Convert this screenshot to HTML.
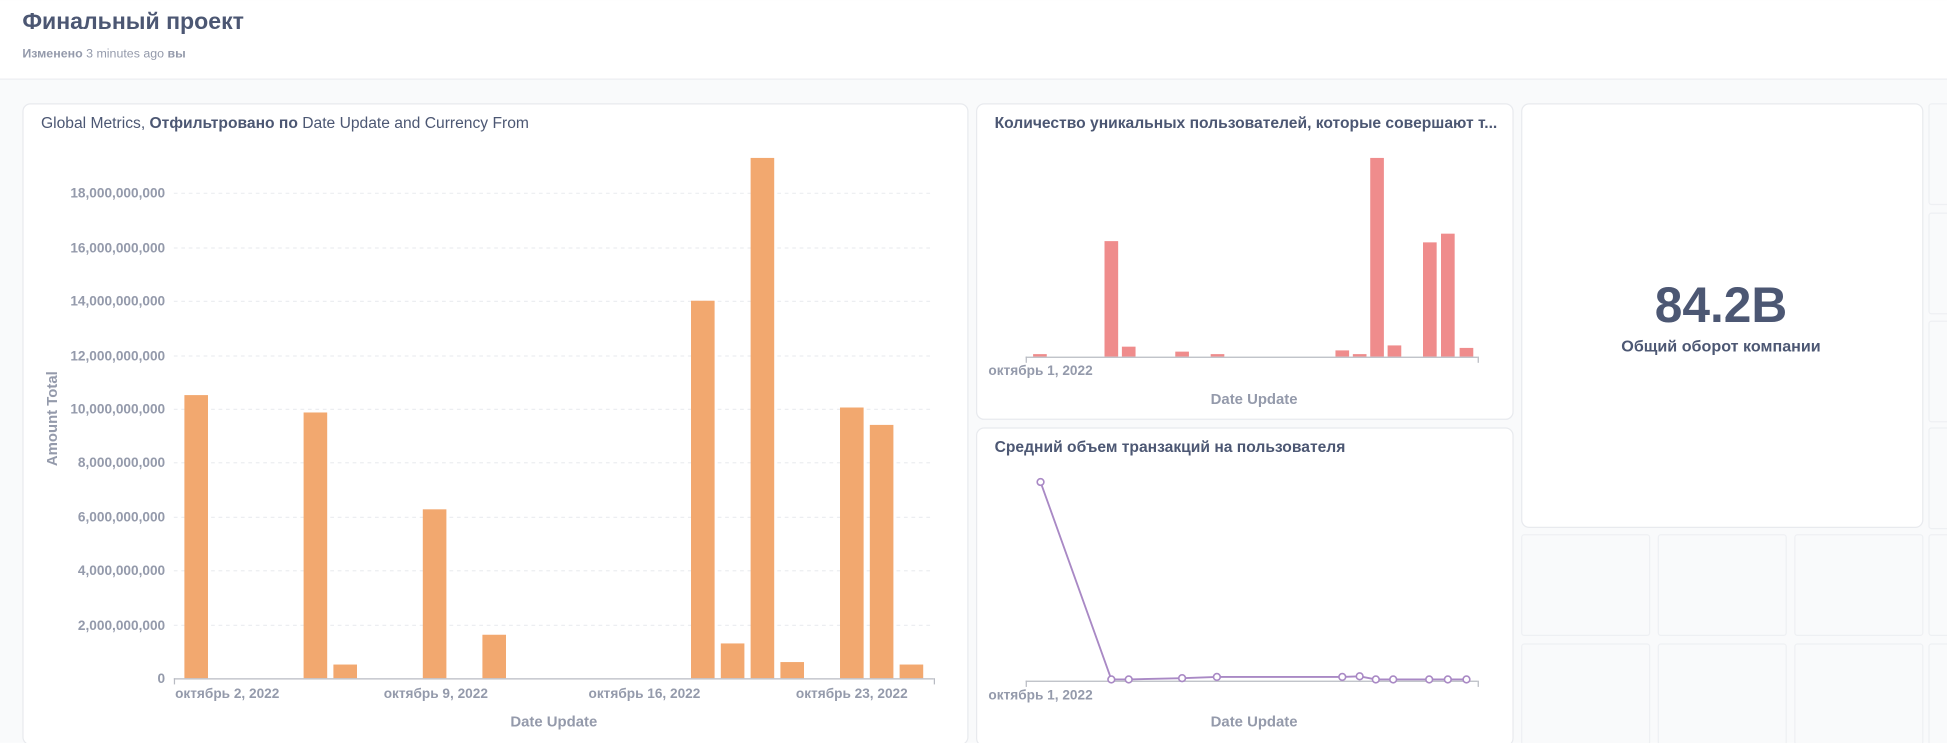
<!DOCTYPE html>
<html><head><meta charset="utf-8"><style>
html,body{margin:0;padding:0;background:#fff;}
svg{display:block;font-family:"Liberation Sans","Noto Sans CJK SC",sans-serif;}
</style></head><body>
<svg width="1947" height="743" viewBox="0 0 1568 598" xmlns="http://www.w3.org/2000/svg">
<rect x="0" y="0" width="1568" height="598" fill="#f9fafb"/>
<rect x="0" y="0" width="1568" height="63" fill="#fff"/>
<line x1="0" y1="63.5" x2="1568" y2="63.5" stroke="#eceef1"/>
<text x="18" y="23" font-size="18.6" font-weight="bold" fill="#4c5773">Финальный проект</text>
<text x="18" y="46" font-size="10" fill="#949aab"><tspan font-weight="bold">Изменено</tspan> 3 minutes ago <tspan font-weight="bold">вы</tspan></text>

<g fill="#f9fafb" stroke="#eef0f3">
<rect x="1225.5" y="430.5" width="103" height="81" rx="2"/>
<rect x="1335.5" y="430.5" width="103" height="81" rx="2"/>
<rect x="1445.5" y="430.5" width="103" height="81" rx="2"/>
<rect x="1225.5" y="518.5" width="103" height="81" rx="2"/>
<rect x="1335.5" y="518.5" width="103" height="81" rx="2"/>
<rect x="1445.5" y="518.5" width="103" height="81" rx="2"/>
<rect x="1553.5" y="83.5" width="30" height="81" rx="2"/>
<rect x="1553.5" y="171.5" width="30" height="81" rx="2"/>
<rect x="1553.5" y="258.5" width="30" height="81" rx="2"/>
<rect x="1553.5" y="344.5" width="30" height="81" rx="2"/>
<rect x="1553.5" y="430.5" width="30" height="81" rx="2"/>
<rect x="1553.5" y="518.5" width="30" height="81" rx="2"/>
</g>

<g fill="#fff" stroke="#e8eaee">
<rect x="18.5" y="83.5" width="761" height="516" rx="6"/>
<rect x="786.5" y="83.5" width="432" height="254" rx="6"/>
<rect x="786.5" y="344.5" width="432" height="256" rx="6"/>
<rect x="1225.5" y="83.5" width="323" height="341" rx="6"/>
</g>

<text x="33" y="103" font-size="12.6" fill="#4c5773">Global Metrics, <tspan font-weight="bold">Отфильтровано по</tspan> Date Update and Currency From</text>
<g stroke="#eceef1" stroke-dasharray="3,3">
<line x1="140" y1="155.5" x2="752" y2="155.5"/>
<line x1="140" y1="199.5" x2="752" y2="199.5"/>
<line x1="140" y1="242.5" x2="752" y2="242.5"/>
<line x1="140" y1="286.5" x2="752" y2="286.5"/>
<line x1="140" y1="329.5" x2="752" y2="329.5"/>
<line x1="140" y1="372.5" x2="752" y2="372.5"/>
<line x1="140" y1="416.5" x2="752" y2="416.5"/>
<line x1="140" y1="459.5" x2="752" y2="459.5"/>
<line x1="140" y1="503.5" x2="752" y2="503.5"/>
</g>
<g font-size="11" font-weight="bold" fill="#949aab" text-anchor="end">
<text x="133" y="159">18,000,000,000</text>
<text x="133" y="203">16,000,000,000</text>
<text x="133" y="246">14,000,000,000</text>
<text x="133" y="290">12,000,000,000</text>
<text x="133" y="333">10,000,000,000</text>
<text x="133" y="376">8,000,000,000</text>
<text x="133" y="420">6,000,000,000</text>
<text x="133" y="463">4,000,000,000</text>
<text x="133" y="507">2,000,000,000</text>
<text x="133" y="550">0</text>
</g>
<text transform="translate(46,337) rotate(-90)" font-size="12" font-weight="bold" fill="#949aab" text-anchor="middle">Amount Total</text>
<g fill="#f2a86f">
<rect x="148.5" y="318" width="19" height="228"/>
<rect x="244.5" y="332" width="19" height="214"/>
<rect x="268.5" y="535" width="19" height="11"/>
<rect x="340.5" y="410" width="19" height="136"/>
<rect x="388.5" y="511" width="19" height="35"/>
<rect x="556.5" y="242" width="19" height="304"/>
<rect x="580.5" y="518" width="19" height="28"/>
<rect x="604.5" y="127" width="19" height="419"/>
<rect x="628.5" y="533" width="19" height="13"/>
<rect x="676.5" y="328" width="19" height="218"/>
<rect x="700.5" y="342" width="19" height="204"/>
<rect x="724.5" y="535" width="19" height="11"/>
</g>
<line x1="140" y1="546.5" x2="752" y2="546.5" stroke="#b8bbc3"/>
<line x1="140.5" y1="546" x2="140.5" y2="551" stroke="#b8bbc3"/>
<line x1="752.5" y1="546" x2="752.5" y2="551" stroke="#b8bbc3"/>
<g font-size="11" font-weight="bold" fill="#949aab" text-anchor="middle">
<text x="183" y="562">октябрь 2, 2022</text>
<text x="351" y="562">октябрь 9, 2022</text>
<text x="519" y="562">октябрь 16, 2022</text>
<text x="686" y="562">октябрь 23, 2022</text>
</g>
<text x="446" y="585" font-size="12" font-weight="bold" fill="#949aab" text-anchor="middle">Date Update</text>

<text x="801" y="103" font-size="12.6" font-weight="bold" fill="#4c5773">Количество уникальных пользователей, которые совершают т...</text>
<g fill="#ef8c8c">
<rect x="832" y="285" width="11" height="2"/>
<rect x="889.5" y="194" width="11" height="93"/>
<rect x="903.5" y="279" width="11" height="8"/>
<rect x="946.5" y="283" width="11" height="4"/>
<rect x="975" y="285" width="11" height="2"/>
<rect x="1075.5" y="282" width="11" height="5"/>
<rect x="1089.5" y="285" width="11" height="2"/>
<rect x="1103.5" y="127" width="11" height="160"/>
<rect x="1117.5" y="278" width="11" height="9"/>
<rect x="1146" y="195" width="11" height="92"/>
<rect x="1160.5" y="188" width="11" height="99"/>
<rect x="1175.5" y="280" width="11" height="7"/>
</g>
<line x1="826" y1="287.5" x2="1190" y2="287.5" stroke="#b8bbc3"/>
<line x1="826.5" y1="287" x2="826.5" y2="292" stroke="#b8bbc3"/>
<line x1="1190.5" y1="287" x2="1190.5" y2="292" stroke="#b8bbc3"/>
<text x="838" y="302" font-size="11" font-weight="bold" fill="#949aab" text-anchor="middle">октябрь 1, 2022</text>
<text x="1010" y="325" font-size="12" font-weight="bold" fill="#949aab" text-anchor="middle">Date Update</text>

<text x="801" y="364" font-size="12.6" font-weight="bold" fill="#4c5773">Средний объем транзакций на пользователя</text>
<line x1="826" y1="548.5" x2="1190" y2="548.5" stroke="#b8bbc3"/>
<line x1="826.5" y1="548" x2="826.5" y2="553" stroke="#b8bbc3"/>
<line x1="1190.5" y1="548" x2="1190.5" y2="553" stroke="#b8bbc3"/>
<polyline fill="none" stroke="#a989c5" stroke-width="1.5" points="838,388 895,547 909,547 952,546 980,545 1081,545 1095,544.5 1108,547 1122,547 1151,547 1166,547 1181,547"/>
<g fill="#fff" stroke="#a989c5" stroke-width="1.3">
<circle cx="838" cy="388" r="2.7"/><circle cx="895" cy="547" r="2.7"/><circle cx="909" cy="547" r="2.7"/>
<circle cx="952" cy="546" r="2.7"/><circle cx="980" cy="545" r="2.7"/><circle cx="1081" cy="545" r="2.7"/>
<circle cx="1095" cy="544.5" r="2.7"/><circle cx="1108" cy="547" r="2.7"/><circle cx="1122" cy="547" r="2.7"/>
<circle cx="1151" cy="547" r="2.7"/><circle cx="1166" cy="547" r="2.7"/><circle cx="1181" cy="547" r="2.7"/>
</g>
<text x="838" y="563" font-size="11" font-weight="bold" fill="#949aab" text-anchor="middle">октябрь 1, 2022</text>
<text x="1010" y="585" font-size="12" font-weight="bold" fill="#949aab" text-anchor="middle">Date Update</text>

<text x="1386" y="259" font-size="40" font-weight="bold" fill="#4c5773" text-anchor="middle">84.2B</text>
<text x="1386" y="283" font-size="13" font-weight="bold" fill="#4c5773" text-anchor="middle">Общий оборот компании</text>
</svg>
</body></html>
